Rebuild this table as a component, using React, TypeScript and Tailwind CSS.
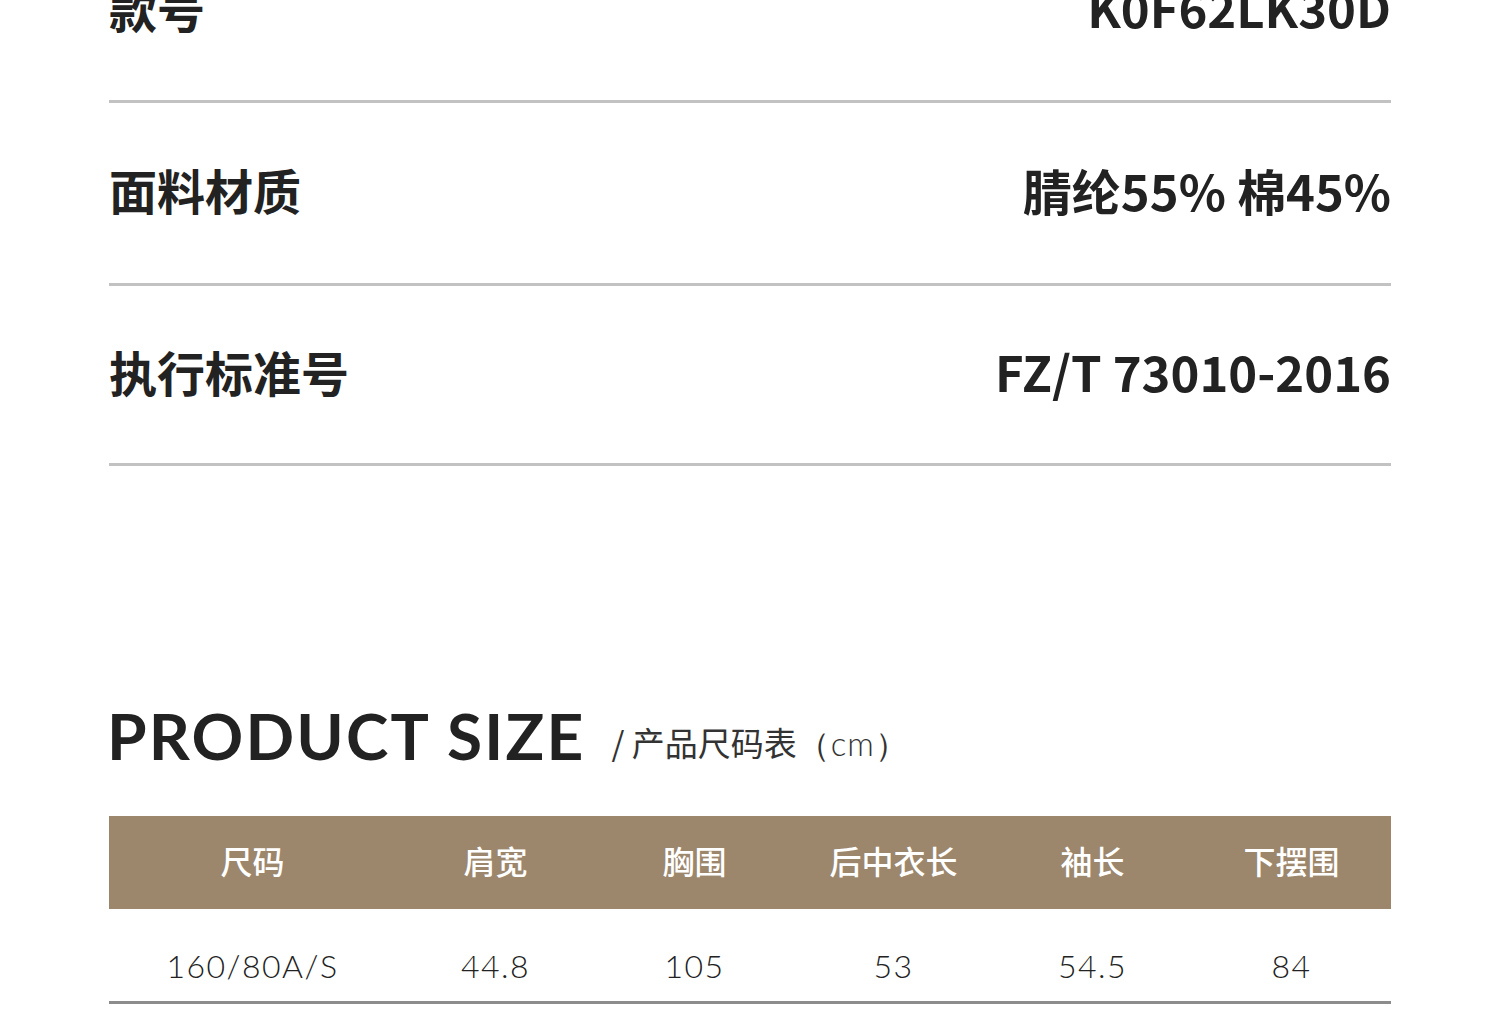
import React from "react";

const cjk = "font-['Noto_Sans_CJK_SC',sans-serif]";

const specs = [
  { k: "款号", v: "K0F62LK30D", h: "h-[182px]" },
  { k: "面料材质", v: "腈纶55% 棉45%", h: "h-[183px]" },
  { k: "执行标准号", v: "FZ/T 73010-2016", h: "h-[180px]" },
];

const heads = ["尺码", "肩宽", "胸围", "后中衣长", "袖长", "下摆围"];
const vals = ["160/80A/S", "44.8", "105", "53", "54.5", "84"];
const widths = ["w-[287px]", "w-[199px]", "w-[199px]", "w-[199px]", "w-[199px]", "w-[199px]"];

export default function App() {
  return (
    <div className="w-[1500px] h-[1009px] overflow-hidden bg-white">
      <div className="mx-[109px] w-[1282px]">
        <div className="-mt-[79px]">
          {specs.map((s, i) => (
            <div
              key={i}
              className={`flex ${s.h} items-center justify-between border-b-[3px] border-[#c2c2c2] pb-[8px] text-[#222] ${cjk}`}
            >
              <span className="text-[48px] font-bold leading-none">{s.k}</span>
              <span className="text-[49px] font-bold leading-none">{s.v}</span>
            </div>
          ))}
        </div>

        <div className="mt-[238px] flex items-end">
          <span className="-ml-[2px] font-['Lato',sans-serif] text-[64px] font-bold leading-none tracking-[2.2px] text-[#222]">
            PRODUCT SIZE
          </span>
          <span className={`ml-[26px] mb-[8px] text-[33px] leading-none text-[#333] ${cjk}`}>
            / 产品尺码表
            <span className="font-['Lato',sans-serif] font-light tracking-[1px]">（cm）</span>
          </span>
        </div>

        <div className="mt-[48px]">
          <div className="flex h-[93px] items-center bg-[#9c866c] pb-[6px]">
            {heads.map((h, i) => (
              <div key={i} className={`${widths[i]} text-center text-[32px] font-medium leading-none text-white ${cjk}`}>
                {h}
              </div>
            ))}
          </div>
          <div className="flex h-[95px] items-center border-b-[3px] border-[#8c8c8c] pt-[22px]">
            {vals.map((v, i) => (
              <div key={i} className={`${widths[i]} text-center font-['Lato',sans-serif] text-[32px] font-light leading-none tracking-[1.5px] text-[#222]`}>
                {v}
              </div>
            ))}
          </div>
        </div>
      </div>
    </div>
  );
}
